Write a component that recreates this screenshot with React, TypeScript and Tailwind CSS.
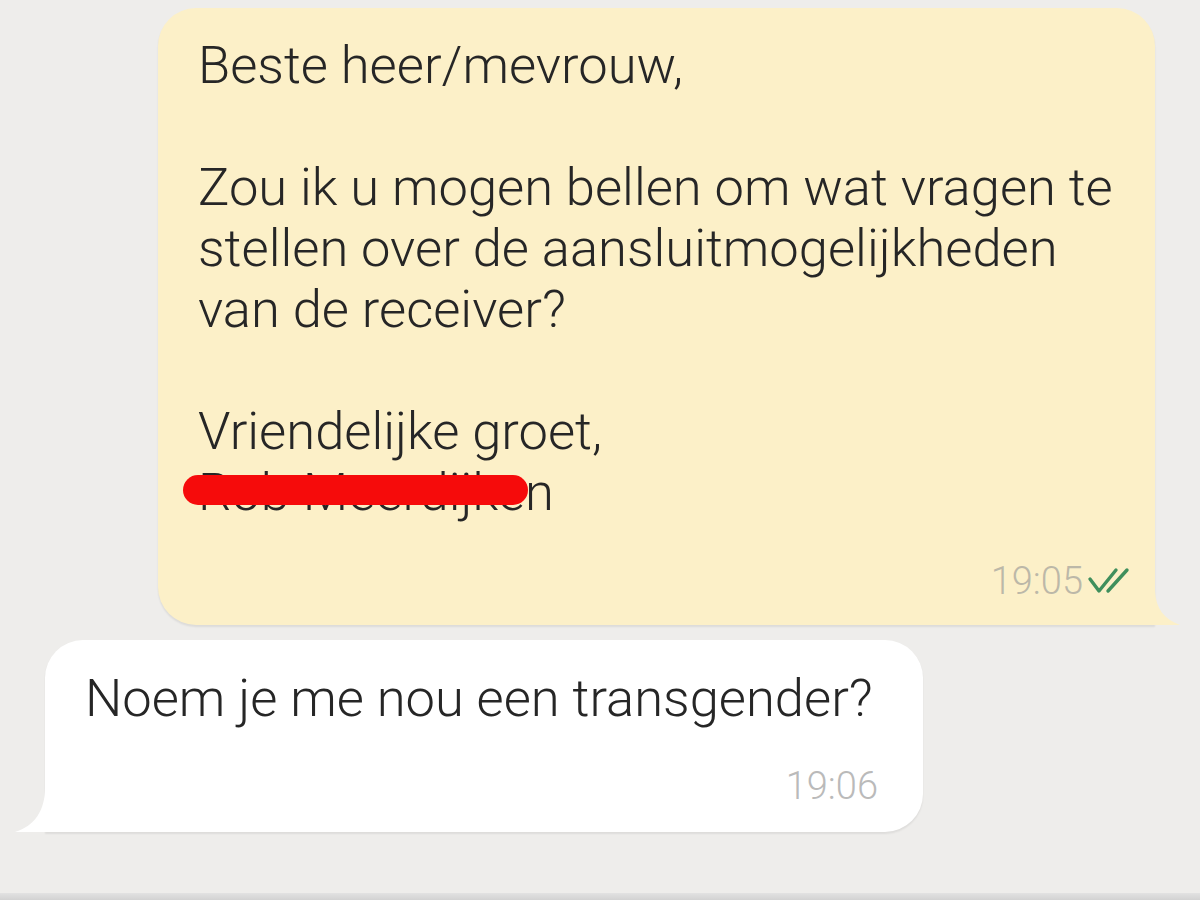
import * as React from "react";

const font = { fontFamily: "Roboto, 'Noto Sans', sans-serif" };

function DoubleTick() {
  return (
    <svg width="44" height="28" viewBox="0 0 44 28" className="ml-[4px] inline-block">
      <path
        d="M3 12 L12 24 L29 3 M21 24 L40 3"
        fill="none"
        stroke="#3f8f5c"
        strokeWidth="3.4"
        strokeLinecap="round"
        strokeLinejoin="round"
      />
    </svg>
  );
}

function OutgoingTail() {
  return (
    <svg
      width="30"
      height="34"
      viewBox="0 0 30 34"
      className="absolute bottom-0 right-[-27px]"
    >
      <path d="M0 0 L3 0 C4 18 12 28 28 34 L0 34 Z" fill="#fcf0c8" />
    </svg>
  );
}

function IncomingTail() {
  return (
    <svg
      width="32"
      height="44"
      viewBox="0 0 32 44"
      className="absolute bottom-0 left-[-30px]"
    >
      <path d="M32 0 L30 0 C30 22 20 38 0 44 L32 44 Z" fill="#ffffff" />
    </svg>
  );
}

export default function App() {
  return (
    <div
      className="flex h-[900px] w-[1200px] flex-col overflow-hidden bg-[#eeedeb] font-light text-[#262626]"
      style={font}
    >
      <div className="flex flex-1 flex-col pt-[8px]">
        {/* outgoing */}
        <div className="relative ml-[158px] h-[617px] w-[997px] rounded-[38px] rounded-br-none bg-[#fcf0c8] shadow-[0_2px_2px_rgba(0,0,0,0.08)]">
          <OutgoingTail />
          <div className="px-[40px] pt-[27px] text-[52.5px] leading-[61px]">
            <div>Beste heer/mevrouw,</div>
            <div>&nbsp;</div>
            <div className="whitespace-nowrap">Zou ik u mogen bellen om wat vragen te</div>
            <div className="whitespace-nowrap">stellen over de aansluitmogelijkheden</div>
            <div>van de receiver?</div>
            <div>&nbsp;</div>
            <div>Vriendelijke groet,</div>
            <div className="relative w-fit">
              Rob Meerdijken
              <div className="absolute left-[-15px] top-[13px] h-[30px] w-[345px] rounded-full bg-[#f60b0b]" />
            </div>
          </div>
          <div className="mt-[38px] flex items-center justify-end pr-[24px] text-[38px] leading-[40px] text-[#bcb8a8]">
            <span>19:05</span>
            <DoubleTick />
          </div>
        </div>

        {/* incoming */}
        <div className="relative ml-[45px] mt-[15px] h-[192px] w-[878px] rounded-[38px] rounded-bl-none bg-white shadow-[0_2px_2px_rgba(0,0,0,0.07)]">
          <IncomingTail />
          <div className="whitespace-nowrap px-[40px] pt-[28px] text-[52.5px] leading-[61px]">
            Noem je me nou een transgender?
          </div>
          <div className="mt-[37px] flex justify-end pr-[45px] text-[38px] leading-[40px] text-[#bababa]">
            19:06
          </div>
        </div>
      </div>
      <div className="h-[7px] bg-gradient-to-b from-[#e2e2e2] to-[#d2d2d2]" />
    </div>
  );
}
